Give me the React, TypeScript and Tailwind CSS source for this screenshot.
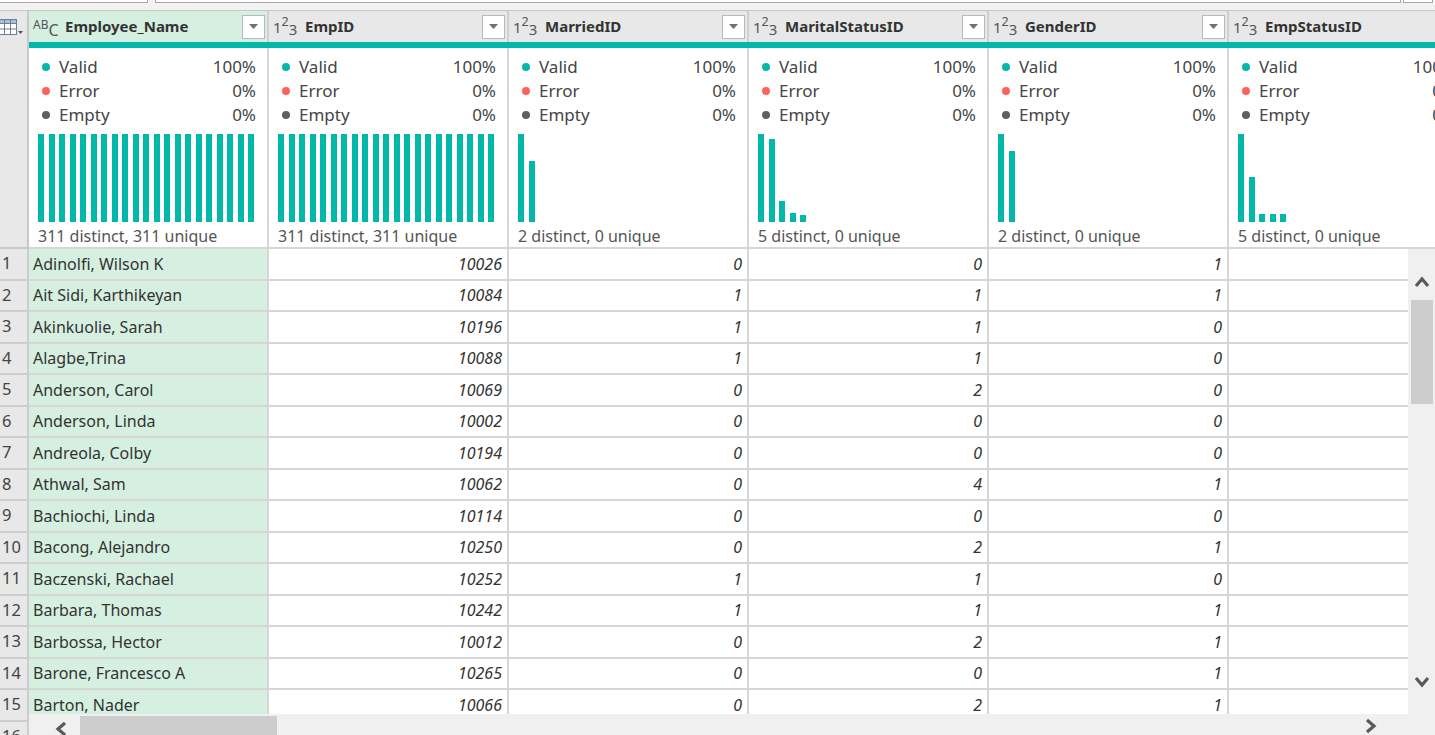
import React from "react";

type Col = {
  name: string;
  type: "abc" | "123";
  bars: number[];
  distinct: string;
};

const full = Array.from({ length: 21 }, () => 88);

const columns: Col[] = [
  { name: "Employee_Name", type: "abc", bars: full, distinct: "311 distinct, 311 unique" },
  { name: "EmpID", type: "123", bars: full, distinct: "311 distinct, 311 unique" },
  { name: "MarriedID", type: "123", bars: [88, 61], distinct: "2 distinct, 0 unique" },
  { name: "MaritalStatusID", type: "123", bars: [88, 83, 21, 9, 7], distinct: "5 distinct, 0 unique" },
  { name: "GenderID", type: "123", bars: [88, 71], distinct: "2 distinct, 0 unique" },
  { name: "EmpStatusID", type: "123", bars: [88, 45, 8, 8, 8], distinct: "5 distinct, 0 unique" },
];

const rows: [string, string, string, string, string][] = [
  ["Adinolfi, Wilson K", "10026", "0", "0", "1"],
  ["Ait Sidi, Karthikeyan", "10084", "1", "1", "1"],
  ["Akinkuolie, Sarah", "10196", "1", "1", "0"],
  ["Alagbe,Trina", "10088", "1", "1", "0"],
  ["Anderson, Carol", "10069", "0", "2", "0"],
  ["Anderson, Linda", "10002", "0", "0", "0"],
  ["Andreola, Colby", "10194", "0", "0", "0"],
  ["Athwal, Sam", "10062", "0", "4", "1"],
  ["Bachiochi, Linda", "10114", "0", "0", "0"],
  ["Bacong, Alejandro", "10250", "0", "2", "1"],
  ["Baczenski, Rachael", "10252", "1", "1", "0"],
  ["Barbara, Thomas", "10242", "1", "1", "1"],
  ["Barbossa, Hector", "10012", "0", "2", "1"],
  ["Barone, Francesco A", "10265", "0", "0", "1"],
  ["Barton, Nader", "10066", "0", "2", "1"],
];

// icône type de colonne (ABC / 123)
const TypeIcon = ({ type }: { type: "abc" | "123" }) => {
  if (type === "abc") {
    return (
      <span className="flex h-[16px] w-[28px] shrink-0 items-start leading-none text-[#555]">
        <span className="text-[12px]">A</span>
        <span className="text-[12px]">B</span>
        <span className="mt-[3px] text-[16px]">C</span>
      </span>
    );
  }
  return (
    <span className="flex h-[16px] w-[28px] shrink-0 items-start leading-none text-[#555]">
      <span className="mt-[1px] text-[15px]">1</span>
      <span className="mt-[-3px] text-[12.5px]">2</span>
      <span className="mt-[3px] text-[15px]">3</span>
    </span>
  );
};

const Chevron = ({ dir }: { dir: "up" | "down" | "left" | "right" }) => {
  const pts = {
    up: "2,10 8,3 14,10",
    down: "2,3 8,10 14,3",
    left: "10,2 3,8 10,14",
    right: "3,2 10,8 3,14",
  }[dir];
  const size = dir === "up" || dir === "down" ? "h-[13px] w-[16px]" : "h-[16px] w-[13px]";
  return (
    <svg viewBox={dir === "up" || dir === "down" ? "0 0 16 13" : "0 0 13 16"} className={size}>
      <polyline points={pts} fill="none" stroke="#5a5a5a" strokeWidth="3.2" />
    </svg>
  );
};

const HeaderCell = ({ col, selected }: { col: Col; selected: boolean }) => (
  <div
    className={`flex h-[31px] w-[240px] shrink-0 items-center border-r-2 border-[#d0d0d0] pl-[4px] pr-[2px] ${
      selected ? "bg-[#d5efe0]" : "bg-[#e8e8e8]"
    }`}
  >
    <TypeIcon type={col.type} />
    <span className="ml-[4px] text-[15px] font-bold text-[#333]">{col.name}</span>
    <div className="ml-auto flex h-[24px] w-[23px] items-center justify-center border border-[#b9b9b9] bg-white">
      <svg viewBox="0 0 9 5" className="h-[5px] w-[9px]">
        <polygon points="0,0 9,0 4.5,5" fill="#707070" />
      </svg>
    </div>
  </div>
);

const Stat = ({ dot, label, value }: { dot: string; label: string; value: string }) => (
  <div className="flex h-[24px] items-center">
    <span className={`ml-[4px] h-[8px] w-[8px] rounded-full ${dot}`} />
    <span className="ml-[9px] text-[17px] text-[#444]">{label}</span>
    <span className="ml-auto text-[17px] text-[#444]">{value}</span>
  </div>
);

const ProfileCell = ({ col }: { col: Col }) => (
  <div className="flex h-[201px] w-[240px] shrink-0 flex-col border-r-2 border-b-2 border-[#d6d6d6] bg-white pl-[9px] pr-[11px] pt-[7px]">
    <Stat dot="bg-[#01b8aa]" label="Valid" value="100%" />
    <Stat dot="bg-[#fd625e]" label="Error" value="0%" />
    <Stat dot="bg-[#5f5f5f]" label="Empty" value="0%" />
    <div className="mt-[7px] flex h-[88px] items-end gap-[4.5px]">
      {col.bars.map((h, i) => (
        <div key={i} className="w-[6px] shrink-0 bg-[#01b8aa]" style={{ height: h }} />
      ))}
    </div>
    <div className="mt-[4px] h-[20px] whitespace-nowrap text-[16px] leading-[20px] text-[#555]">{col.distinct}</div>
  </div>
);

const App = () => {
  return (
    <div className="h-[735px] w-[1435px] overflow-hidden bg-white font-['Noto_Sans','Open_Sans',sans-serif] text-[#333]">
      {/* bas de la barre de formule */}
      <div className="flex h-[11px] items-start border-b border-[#c8c8c8] bg-[#f2f2f2]">
        <div className="h-[3px] w-[148px] border-r border-b border-[#a8a8a8] bg-white" />
        <div className="ml-[7px] h-[3px] w-[1246px] border-x border-b border-[#a8a8a8] bg-white" />
        <div className="ml-[2px] h-[3px] w-[30px] border-x border-b border-[#a8a8a8] bg-white" />
      </div>

      {/* en-têtes */}
      <div className="flex">
        <div className="flex h-[37px] w-[29px] shrink-0 flex-col border-r-2 border-[#c8c8c8] bg-[#e8e8e8]">
          <div className="flex h-[31px] items-center">
            <svg viewBox="0 0 26 16" className="ml-[-2px] h-[16px] w-[26px]">
              <rect x="0.5" y="0.5" width="18" height="15" fill="#fff" stroke="#6f7f92" />
              <rect x="0.5" y="0.5" width="18" height="4" fill="#a9bfd8" stroke="#6f7f92" />
              <line x1="6.5" y1="0.5" x2="6.5" y2="15.5" stroke="#6f7f92" />
              <line x1="12.5" y1="0.5" x2="12.5" y2="15.5" stroke="#6f7f92" />
              <line x1="0.5" y1="10" x2="18.5" y2="10" stroke="#6f7f92" />
              <polygon points="20,12 25,12 22.5,15" fill="#555" />
            </svg>
          </div>
        </div>
        <div className="flex min-w-0 flex-1 overflow-hidden">
          {columns.map((c, i) => (
            <div key={c.name} className="flex shrink-0 flex-col">
              <HeaderCell col={c} selected={i === 0} />
              <div className="h-[6px] w-[240px] bg-[#01b8aa]" />
            </div>
          ))}
        </div>
      </div>

      {/* profil des colonnes */}
      <div className="flex">
        <div className="h-[201px] w-[29px] shrink-0 border-r-2 border-b-2 border-[#c8c8c8] bg-[#e8e8e8]" />
        <div className="flex min-w-0 flex-1 overflow-hidden">
          {columns.map((c) => (
            <ProfileCell key={c.name} col={c} />
          ))}
        </div>
      </div>

      {/* lignes */}
      <div className="flex h-[486px]">
        <div className="w-[29px] shrink-0 overflow-hidden bg-[#e8e8e8]">
          {Array.from({ length: 16 }, (_, i) => (
            <div
              key={i}
              className="flex h-[31.5px] items-center border-r-2 border-b-2 border-[#cdcdcd] pl-[2px] text-[16.5px] text-[#444]"
            >
              {i + 1}
            </div>
          ))}
        </div>
        <div className="flex min-w-0 flex-1 flex-col">
          <div className="flex h-[465px]">
            <div className="min-w-0 flex-1 overflow-hidden">
              {rows.map((r, i) => (
                <div key={i} className="flex">
                  <div className="flex h-[31.5px] w-[240px] shrink-0 items-center border-r-2 border-b-2 border-[#d6d6d6] bg-[#d5efe0] pl-[4px] text-[16px] text-[#333]">
                    {r[0]}
                  </div>
                  {r.slice(1).map((v, j) => (
                    <div
                      key={j}
                      className="flex h-[31.5px] w-[240px] shrink-0 items-center justify-end border-r-2 border-b-2 border-[#d6d6d6] pr-[5px] text-[16px] italic text-[#333]"
                    >
                      {v}
                    </div>
                  ))}
                  <div className="h-[31.5px] w-[240px] shrink-0 border-r-2 border-b-2 border-[#d6d6d6]" />
                </div>
              ))}
            </div>
            {/* barre de défilement verticale */}
            <div className="flex w-[27px] shrink-0 flex-col items-center bg-[#f0f0f0]">
              <div className="mt-[27px]">
                <Chevron dir="up" />
              </div>
              <div className="mt-[11px] h-[104px] w-[22px] bg-[#cdcdcd]" />
              <div className="flex-1" />
              <div className="mb-[26px]">
                <Chevron dir="down" />
              </div>
            </div>
          </div>
          {/* barre de défilement horizontale */}
          <div className="flex h-[21px] items-start bg-[#f0f0f0]">
            <div className="ml-[26px] mt-[7px]">
              <Chevron dir="left" />
            </div>
            <div className="ml-[12px] mt-[2px] h-[19px] w-[197px] bg-[#cdcdcd]" />
            <div className="flex-1" />
            <div className="mr-[58px] mt-[4px]">
              <Chevron dir="right" />
            </div>
          </div>
        </div>
      </div>
    </div>
  );
};

export default App;
